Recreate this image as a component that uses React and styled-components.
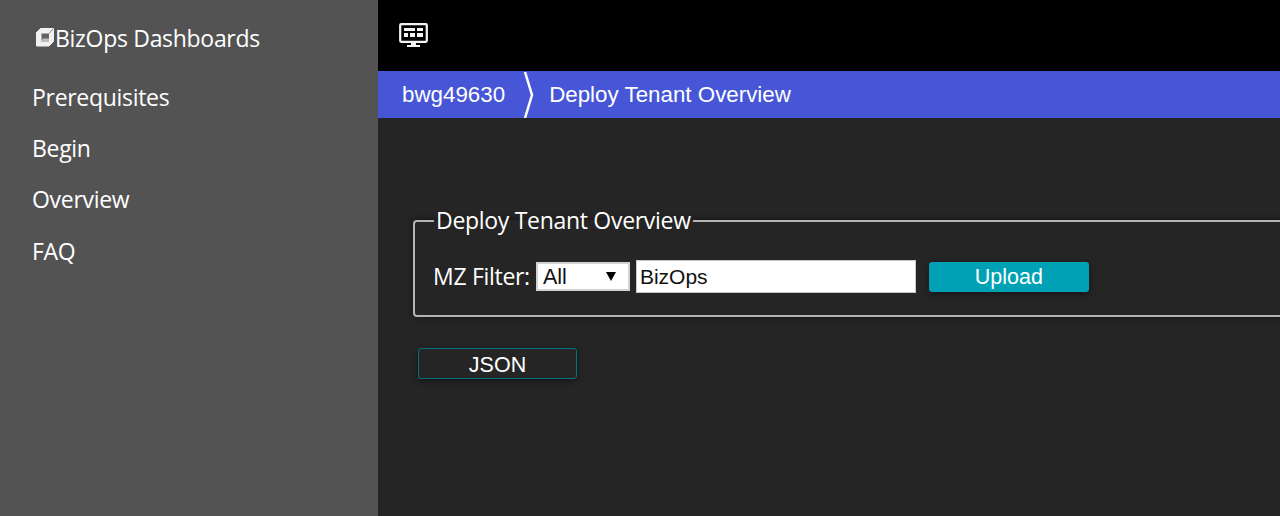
import React from "react";
import styled, { createGlobalStyle } from "styled-components";

const GlobalStyle = createGlobalStyle`
  html, body {
    margin: 0;
    height: 100%;
    overflow: hidden;
    background: #252525;
  }
`;

const Page = styled.div`
  display: flex;
  width: 1280px;
  height: 516px;
  overflow: hidden;
`;

const Sidebar = styled.nav`
  width: 378px;
  flex-shrink: 0;
  background: #535353;
  padding: 19px 0 0 32px;
  box-sizing: border-box;
  font-family: "Open Sans", sans-serif;
  color: #fff;
`;

const Brand = styled.div`
  display: flex;
  align-items: center;
  height: 37px;
  margin-left: 3px;
  font-size: 23px;
  letter-spacing: -0.3px;
`;

const NavItem = styled.a`
  display: block;
  height: 51.400px;
  line-height: 51.400px;
  font-size: 23px;
  letter-spacing: -0.3px;
  &:first-of-type {
    margin-top: 15.500px;
  }
`;

const Main = styled.main`
  flex: 1;
  min-width: 0;
  background: #252525;
  font-family: "Liberation Sans", Arial, sans-serif;
`;

const TopBar = styled.header`
  display: flex;
  align-items: center;
  height: 71px;
  padding-left: 21px;
  box-sizing: border-box;
  background: #000;
`;

const Crumbs = styled.div`
  display: flex;
  align-items: center;
  height: 47px;
  padding: 1px 0 0 24px;
  box-sizing: border-box;
  background: #4656d7;
  color: #fff;
  font-size: 22.350px;
`;

const CrumbArrow = styled.svg`
  width: 14px;
  height: 46px;
  margin: -1px 12px 0 18px;
`;

const Content = styled.section`
  padding: 87px 0 0 35px;
`;

const Group = styled.fieldset`
  width: 1000px;
  height: 112px;
  margin: 0;
  padding: 0 0 0 18px;
  box-sizing: border-box;
  border: 2px solid #b4b4b4;
  border-radius: 4px;
  box-shadow: 0 0 6px rgba(0, 0, 0, 0.5);
  color: #fff;
  font-family: "Open Sans", sans-serif;
`;

const GroupTitle = styled.legend`
  padding: 0 2px;
  margin-left: 1px;
  font-size: 23px;
  line-height: 31px;
  letter-spacing: -0.3px;
  color: #fff;
`;

const FilterRow = styled.div`
  display: flex;
  align-items: center;
  height: 31px;
  margin-top: 25px;
`;

const FilterLabel = styled.label`
  font-size: 23px;
  letter-spacing: -0.3px;
  margin: 0 6px 2px 0;
`;

const SelectBox = styled.div`
  display: flex;
  align-items: center;
  justify-content: space-between;
  width: 94px;
  height: 29px;
  padding: 2px 12px 0 5px;
  margin-right: 6px;
  box-sizing: border-box;
  background: #fff;
  border: 2px solid #d2d2d2;
  color: #111;
  font-family: "Liberation Sans", Arial, sans-serif;
  font-size: 21.500px;
`;

const Caret = styled.span`
  width: 0;
  height: 0;
  margin-bottom: 3px;
  border-left: 5.500px solid transparent;
  border-right: 5.500px solid transparent;
  border-top: 9px solid #000;
`;

const TextBox = styled.input`
  width: 280px;
  height: 33px;
  padding: 0 3px;
  margin-right: 13px;
  box-sizing: border-box;
  background: #fff;
  border: 1px solid #c8c8c8;
  color: #111;
  font-family: "Liberation Sans", Arial, sans-serif;
  font-size: 21px;
  outline: none;
`;

const ActionButton = styled.button`
  display: block;
  width: ${(p) => (p.$outlined ? 159 : 160)}px;
  height: ${(p) => (p.$outlined ? 31 : 30)}px;
  padding: ${(p) => (p.$outlined ? 3 : 1)}px 0 0;
  box-sizing: border-box;
  background: ${(p) => (p.$outlined ? "#252525" : "#00a1b4")};
  border: ${(p) => (p.$outlined ? "1.500px solid #04727e" : "none")};
  border-radius: 3px;
  box-shadow: 0 2px 6px rgba(0, 0, 0, 0.45);
  color: #fff;
  font-family: "Liberation Sans", Arial, sans-serif;
  font-size: 21.500px;
`;

const JsonRow = styled.div`
  margin: 31px 0 0 5px;
`;

const CubeLogo = () => (
  <svg width="20" height="21" viewBox="0 0 20 21" aria-hidden="true">
    <path
      fill="#f1f1f1"
      stroke="#f1f1f1"
      strokeLinejoin="round"
      d="M5.500 1.500H18.500V14.500L14 19H1.500V5.500Z"
    />
    <path fill="#626262" d="M6.500 6.500H14V13H6.500Z" />
    <path fill="#bdbdbd" d="M5 15L8 11.500H14V15Z" />
    <path stroke="#8a8a8a" strokeWidth="1" d="M14 6.500L18 2" />
  </svg>
);

const MonitorIcon = () => (
  <svg width="29" height="25" viewBox="0 0 29 25" aria-hidden="true">
    <rect x="1.200" y="1.200" width="26.600" height="17.600" rx="1" fill="none" stroke="#f4f4f4" strokeWidth="2.200" />
    <path fill="#f4f4f4" d="M5 5h11v3H5zM18 5h6v3h-6zM5 10h4v4H5zM11 10h5v4h-5zM18 10h6v4h-6zM12 19h5v3h-5zM8 22h13v2H8z" />
  </svg>
);

export default function App() {
  return (
    <>
      <GlobalStyle />
      <Page>
        <Sidebar>
          <Brand>
            <CubeLogo />
            BizOps Dashboards
          </Brand>
          <NavItem>Prerequisites</NavItem>
          <NavItem>Begin</NavItem>
          <NavItem>Overview</NavItem>
          <NavItem>FAQ</NavItem>
        </Sidebar>
        <Main>
          <TopBar>
            <MonitorIcon />
          </TopBar>
          <Crumbs>
            bwg49630
            <CrumbArrow viewBox="0 0 14 46" aria-hidden="true">
              <path d="M2 0l7 23L2 46" fill="none" stroke="#fff" strokeWidth="2.500" />
            </CrumbArrow>
            Deploy Tenant Overview
          </Crumbs>
          <Content>
            <Group>
              <GroupTitle>Deploy Tenant Overview</GroupTitle>
              <FilterRow>
                <FilterLabel>MZ Filter:</FilterLabel>
                <SelectBox>
                  All
                  <Caret />
                </SelectBox>
                <TextBox defaultValue="BizOps" />
                <ActionButton>Upload</ActionButton>
              </FilterRow>
            </Group>
            <JsonRow>
              <ActionButton $outlined>JSON</ActionButton>
            </JsonRow>
          </Content>
        </Main>
      </Page>
    </>
  );
}
